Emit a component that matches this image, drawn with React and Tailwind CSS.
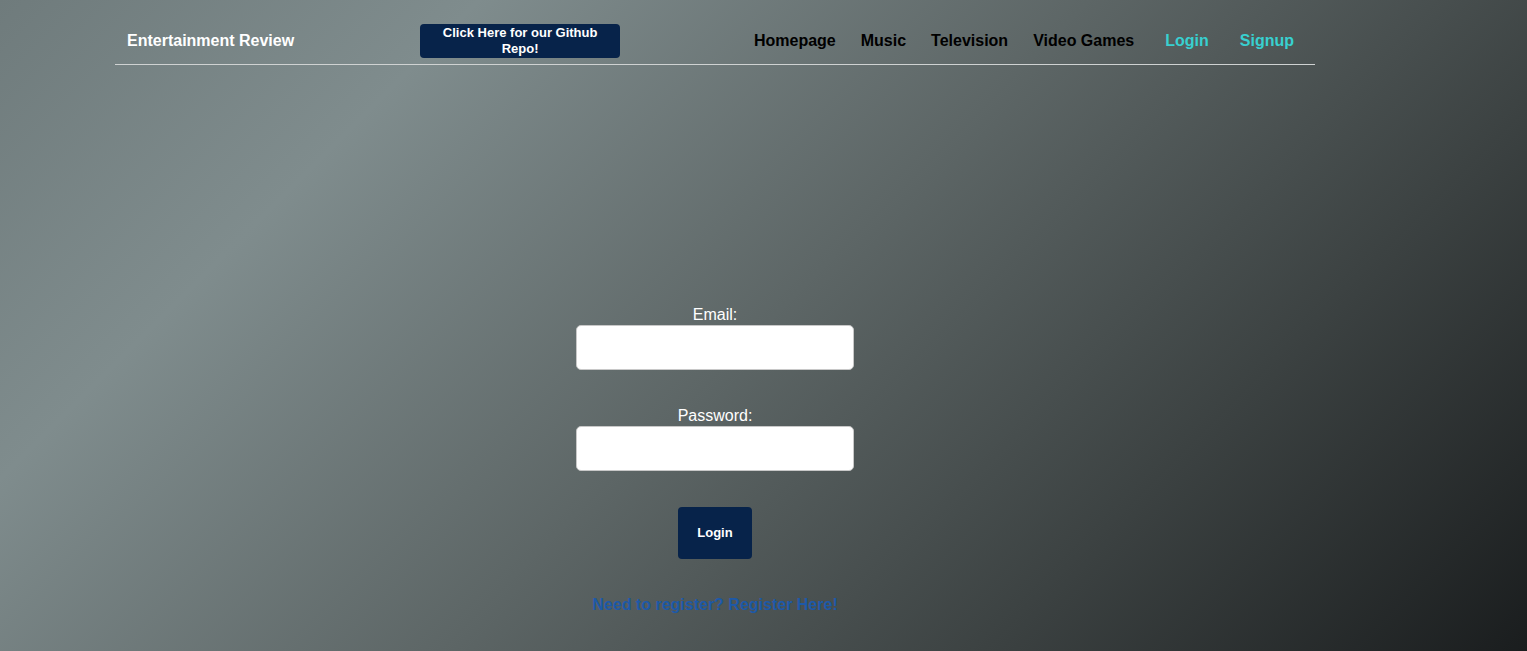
export default function App() {
    return (
        <div
            className="min-h-screen w-full bg-[linear-gradient(135deg,#6f7b7c_0%,#7f8c8d_22%,#5d6666_50%,#3c4242_75%,#1a1d1e_100%)] text-white"
            style={{ fontFamily: '"Liberation Sans", Arial, sans-serif' }}
        >
            <div className="ml-[115px] w-[1200px]">
                {/* Navbar */}
                <nav className="flex items-center h-[65px] border-b border-[#cfd2d2] pt-[17px] pl-[12px] pr-[21px]">
                    <a href="#" className="text-[16px] font-bold text-white">Entertainment Review</a>
                    <a
                        href="#"
                        className="ml-[126px] w-[200px] py-[1px] px-[20px] rounded-[4px] bg-[#07234a] text-center text-[13px] leading-[16px] font-bold text-white"
                    >
                        Click Here for our Github Repo!
                    </a>
                    <ul className="ml-auto flex items-center text-[16px] font-bold">
                        <li><a href="#" className="text-black">Homepage</a></li>
                        <li className="ml-[25px]"><a href="#" className="text-black">Music</a></li>
                        <li className="ml-[25px]"><a href="#" className="text-black">Television</a></li>
                        <li className="ml-[25px]"><a href="#" className="text-black">Video Games</a></li>
                        <li className="ml-[31px]"><a href="#" className="text-[#38d0d0]">Login</a></li>
                        <li className="ml-[31px]"><a href="#" className="text-[#38d0d0]">Signup</a></li>
                    </ul>
                </nav>

                {/* Login form */}
                <form className="flex flex-col items-center pt-[241px]" onSubmit={(e) => e.preventDefault()}>
                    <label htmlFor="email" className="text-[16px] leading-[18px]">Email:</label>
                    <input
                        id="email"
                        type="email"
                        className="mt-[1px] w-[278px] h-[45px] rounded-[5px] border border-[#c8c8c8] bg-white px-2 text-black outline-none"
                    />

                    <label htmlFor="password" className="mt-[37px] text-[16px] leading-[18px]">Password:</label>
                    <input
                        id="password"
                        type="password"
                        className="mt-[1px] w-[278px] h-[45px] rounded-[5px] border border-[#c8c8c8] bg-white px-2 text-black outline-none"
                    />

                    <button
                        type="submit"
                        className="mt-[36px] w-[74px] h-[52px] rounded-[4px] bg-[#07234a] text-[13px] font-bold text-white"
                    >
                        Login
                    </button>

                    <a href="#" className="mt-[37px] text-[16px] leading-[18px] font-bold text-[#1d59a8]">
                        Need to register? Register Here!
                    </a>
                </form>
            </div>
        </div>
    )
}
